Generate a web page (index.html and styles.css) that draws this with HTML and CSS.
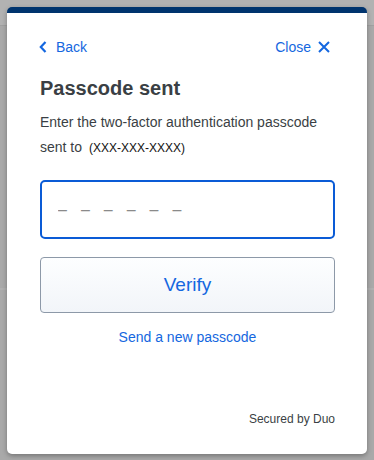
FILE: index.html
```html
<!DOCTYPE html>
<html lang="en">
<head>
    <meta charset="UTF-8">
    <meta name="viewport" content="width=device-width, initial-scale=1.0">
    <title>Passcode sent</title>
    <link rel="stylesheet" href="styles.css">
</head>
<body>
    <div class="card">
        <div class="nav">
            <a href="#" class="nav-link">
                <svg class="chev" width="8" height="12" viewBox="0 0 8 12">
                    <polyline points="6.5,1 1.8,6 6.5,11" fill="none" stroke="currentColor" stroke-width="2.2"/>
                </svg>
                Back
            </a>
            <a href="#" class="nav-link">
                Close
                <svg class="cross" width="12" height="12" viewBox="0 0 12 12">
                    <path d="M1 1 L11 11 M11 1 L1 11" stroke="currentColor" stroke-width="2"/>
                </svg>
            </a>
        </div>

        <h1>Passcode sent</h1>
        <p class="desc">Enter the two-factor authentication passcode sent to<span class="phone">(XXX-XXX-XXXX)</span></p>

        <input type="text" class="code" placeholder="––––––">
        <button class="verify">Verify</button>
        <a href="#" class="resend">Send a new passcode</a>

        <div class="footer">Secured by Duo</div>
    </div>
</body>
</html>
```

FILE: styles.css
```css
/* page behind the dialog */
body {
    margin: 0;
    height: 460px;
    font-family: "Liberation Sans", Arial, sans-serif;
    background:
        linear-gradient(#b2b2b2, #b2b2b2) 0 0 / 100% 25px no-repeat,
        linear-gradient(#a0a0a0, #a0a0a0) 0 25px / 100% 1px no-repeat,
        linear-gradient(#b0b0b0, #b0b0b0) 0 288px / 100% 2px no-repeat,
        #a9a9a9;
    overflow: hidden;
}

/* dialog */
.card {
    margin: 7px;
    width: 360px;
    height: 447px;
    box-sizing: border-box;
    background: #fff;
    border-top: 6px solid #00346e;
    border-radius: 5px;
    box-shadow: 0 2px 5px rgba(0, 0, 0, 0.3);
    padding: 0 32px 0 33px;
    display: flex;
    flex-direction: column;
    color: #3a3f44;
}

.nav {
    display: flex;
    justify-content: space-between;
    align-items: center;
    margin-top: 24px;
    height: 20px;
}

.nav-link {
    display: flex;
    align-items: center;
    font-size: 14px;
    color: #1467e0;
    text-decoration: none;
}

.chev {
    margin: 0 9px 0 -1px;
}

.cross {
    margin: 0 5px 0 7px;
}

h1 {
    font-size: 20px;
    line-height: 24px;
    margin: 19px 0 0;
    color: #3a3f44;
}

.desc {
    font-size: 14px;
    line-height: 25px;
    margin: 10px 0 0;
}

.phone {
    display: inline-block;
    vertical-align: middle;
    margin-left: 7px;
    font-size: 12px;
    line-height: 14px;
    color: #111;
}

.code {
    margin-top: 20px;
    height: 59px;
    width: 100%;
    box-sizing: border-box;
    border: 2px solid #0a5bd6;
    border-radius: 5px;
    padding: 0 16px;
    font-family: "Liberation Sans", Arial, sans-serif;
    font-size: 16px;
    letter-spacing: 14px;
    outline: none;
}

.code::placeholder {
    color: #8a8a8a;
}

.verify {
    margin-top: 18px;
    height: 56px;
    width: 100%;
    border: 1px solid #8d99a8;
    border-radius: 4px;
    background: linear-gradient(#fdfeff, #f2f5f9);
    color: #1467e0;
    font-family: "Liberation Sans", Arial, sans-serif;
    font-size: 19px;
    cursor: pointer;
}

.resend {
    margin-top: 14px;
    line-height: 20px;
    text-align: center;
    font-size: 14px;
    color: #1467e0;
    text-decoration: none;
}

.footer {
    margin-top: auto;
    margin-bottom: 27px;
    text-align: right;
    font-size: 12px;
    line-height: 16px;
    color: #3a3f44;
}
```
